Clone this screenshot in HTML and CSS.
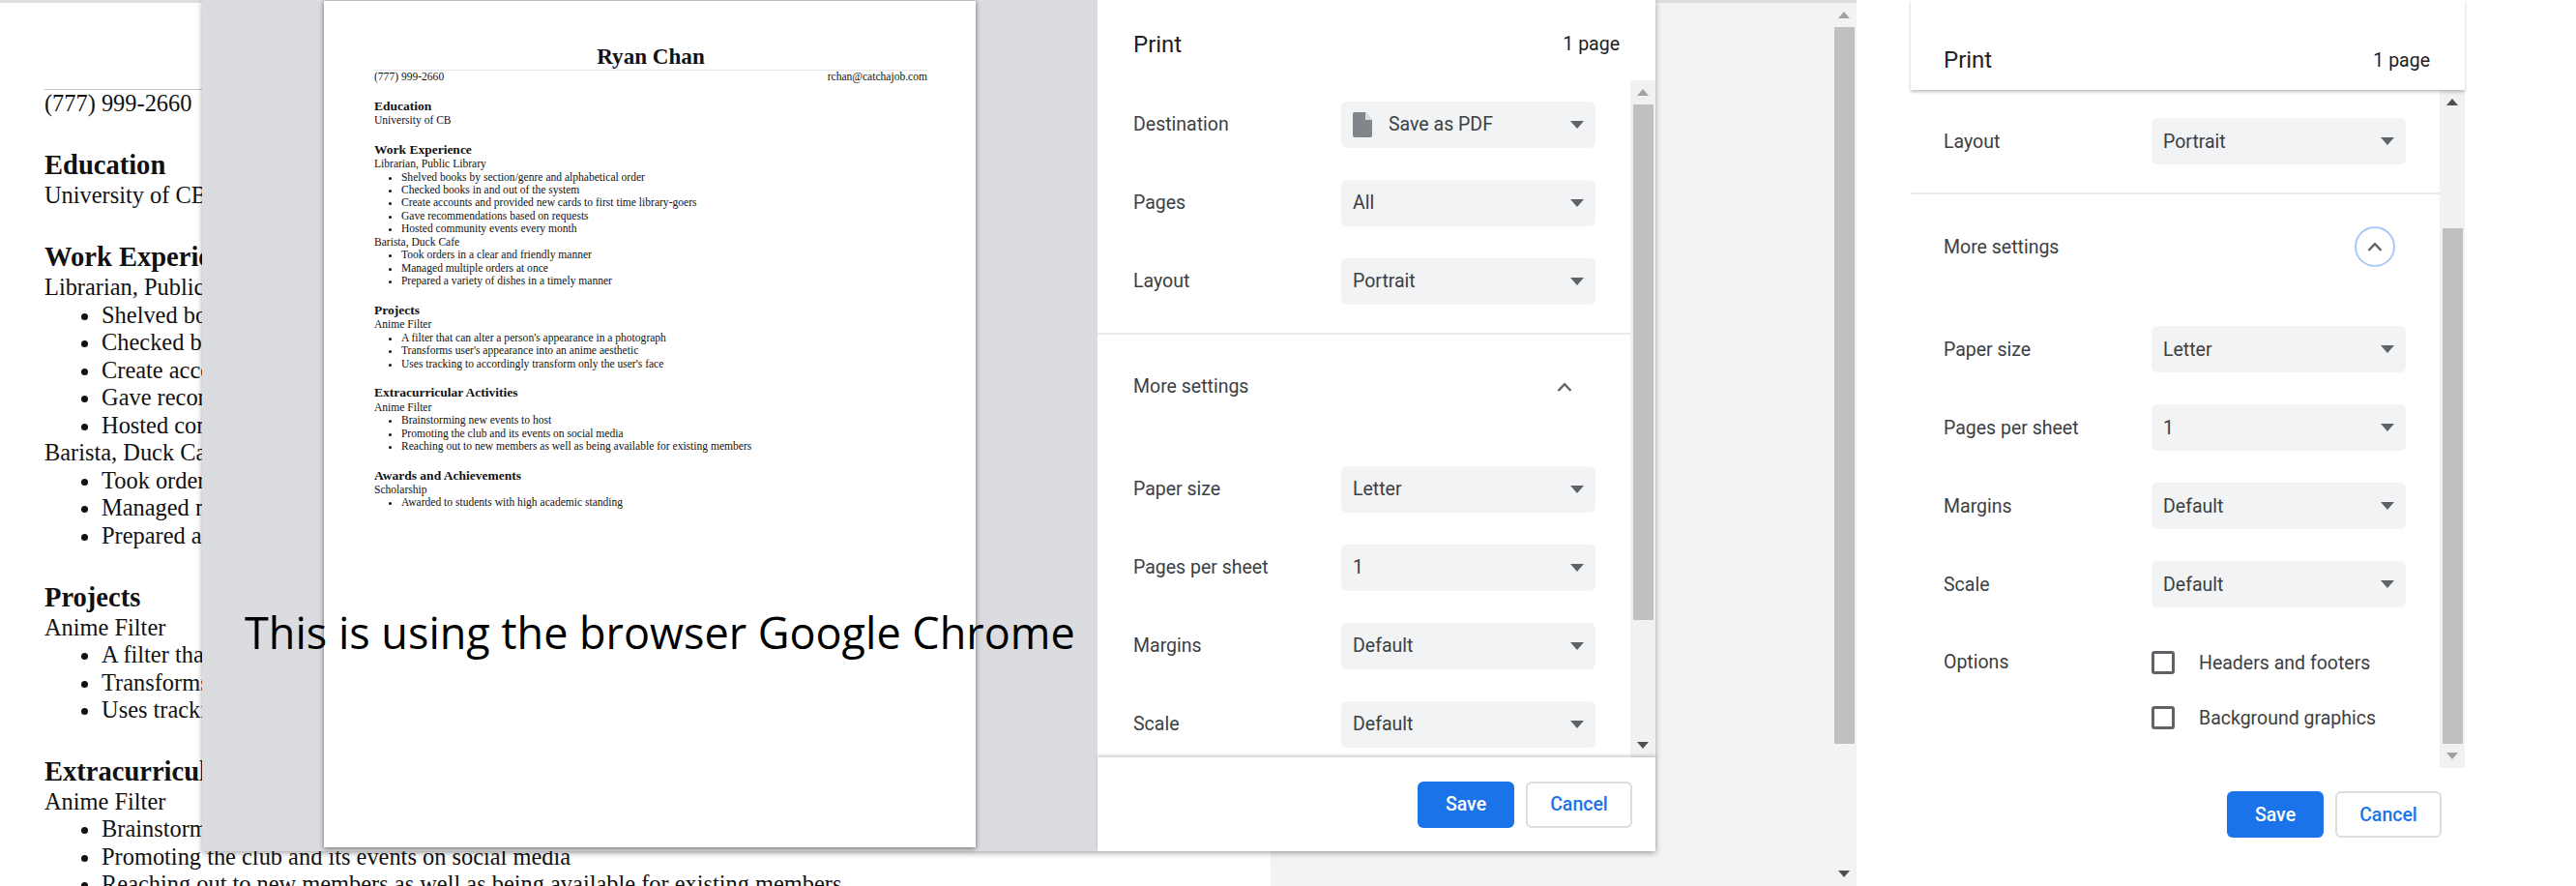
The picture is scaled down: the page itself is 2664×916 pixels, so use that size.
FILE: index.html
```html
<!DOCTYPE html>
<html lang="en">
<head>
  <meta charset="UTF-8">
  <title>Print preview comparison</title>
  <link rel="stylesheet" href="styles.css">
</head>
<body>
  <div class="browser">
    <div class="browser-bar"></div>
    <div class="browser-body">
      <div class="doc">
        <div class="resume resume-page">
          <h1>Ryan Chan</h1>
          <div class="contact"><span>(777) 999-2660</span><span>rchan@catchajob.com</span></div>
          <h2>Education</h2>
          <p>University of CB</p>
          <h2 class="next">Work Experience</h2>
          <p>Librarian, Public Library</p>
          <ul>
            <li>Shelved books by section/genre and alphabetical order</li>
            <li>Checked books in and out of the system</li>
            <li>Create accounts and provided new cards to first time library-goers</li>
            <li>Gave recommendations based on requests</li>
            <li>Hosted community events every month</li>
          </ul>
          <p>Barista, Duck Cafe</p>
          <ul>
            <li>Took orders in a clear and friendly manner</li>
            <li>Managed multiple orders at once</li>
            <li>Prepared a variety of dishes in a timely manner</li>
          </ul>
          <h2 class="next">Projects</h2>
          <p>Anime Filter</p>
          <ul>
            <li>A filter that can alter a person's appearance in a photograph</li>
            <li>Transforms user's appearance into an anime aesthetic</li>
            <li>Uses tracking to accordingly transform only the user's face</li>
          </ul>
          <h2 class="next">Extracurricular Activities</h2>
          <p>Anime Filter</p>
          <ul>
            <li>Brainstorming new events to host</li>
            <li>Promoting the club and its events on social media</li>
            <li>Reaching out to new members as well as being available for existing members</li>
          </ul>
        </div>
      </div>
      <div class="gutter"></div>
      <div class="scrollbar scrollbar-page">
        <span class="arrow-up muted"></span>
        <div class="thumb"></div>
        <span class="arrow-down"></span>
      </div>
    </div>

    <!-- print dialog sits over the page -->
    <div class="dialog">
      <div class="preview">
        <div class="paper">
          <div class="resume resume-sheet">
            <h1>Ryan Chan</h1>
            <div class="contact"><span>(777) 999-2660</span><span>rchan@catchajob.com</span></div>
            <h2>Education</h2>
            <p>University of CB</p>
            <h2 class="next">Work Experience</h2>
            <p>Librarian, Public Library</p>
            <ul>
              <li>Shelved books by section/genre and alphabetical order</li>
              <li>Checked books in and out of the system</li>
              <li>Create accounts and provided new cards to first time library-goers</li>
              <li>Gave recommendations based on requests</li>
              <li>Hosted community events every month</li>
            </ul>
            <p>Barista, Duck Cafe</p>
            <ul>
              <li>Took orders in a clear and friendly manner</li>
              <li>Managed multiple orders at once</li>
              <li>Prepared a variety of dishes in a timely manner</li>
            </ul>
            <h2 class="next">Projects</h2>
            <p>Anime Filter</p>
            <ul>
              <li>A filter that can alter a person's appearance in a photograph</li>
              <li>Transforms user's appearance into an anime aesthetic</li>
              <li>Uses tracking to accordingly transform only the user's face</li>
            </ul>
            <h2 class="next">Extracurricular Activities</h2>
            <p>Anime Filter</p>
            <ul>
              <li>Brainstorming new events to host</li>
              <li>Promoting the club and its events on social media</li>
              <li>Reaching out to new members as well as being available for existing members</li>
            </ul>
            <h2 class="next">Awards and Achievements</h2>
            <p>Scholarship</p>
            <ul>
              <li>Awarded to students with high academic standing</li>
            </ul>
          </div>
        </div>
      </div>

      <div class="sidebar sidebar-main">
        <div class="sidebar-head">
          <span class="print-title">Print</span>
          <span class="page-count">1 page</span>
        </div>
        <div class="sidebar-scroll">
          <div class="settings">
            <div class="row">
              <span class="row-label">Destination</span>
              <div class="select select-dest">
                <svg class="file-icon" width="20" height="26" viewBox="0 0 20 26"><path d="M2 0h11l7 8v16a2 2 0 0 1-2 2H2a2 2 0 0 1-2-2V2a2 2 0 0 1 2-2z" fill="#80868b"/><path d="M13 0l7 8h-7z" fill="#dadce0"/></svg>
                <span>Save as PDF</span>
              </div>
            </div>
            <div class="row">
              <span class="row-label">Pages</span>
              <div class="select"><span>All</span></div>
            </div>
            <div class="row">
              <span class="row-label">Layout</span>
              <div class="select"><span>Portrait</span></div>
            </div>
            <div class="divider"></div>
            <div class="more">
              <span class="row-label">More settings</span>
              <span class="chevron">
                <svg width="16" height="10" viewBox="0 0 16 10"><path d="M1.5 9L8 2.2 14.5 9" fill="none" stroke="#5f6368" stroke-width="2.4"/></svg>
              </span>
            </div>
            <div class="row">
              <span class="row-label">Paper size</span>
              <div class="select"><span>Letter</span></div>
            </div>
            <div class="row">
              <span class="row-label">Pages per sheet</span>
              <div class="select"><span>1</span></div>
            </div>
            <div class="row">
              <span class="row-label">Margins</span>
              <div class="select"><span>Default</span></div>
            </div>
            <div class="row">
              <span class="row-label">Scale</span>
              <div class="select"><span>Default</span></div>
            </div>
          </div>
          <div class="scrollbar scrollbar-main">
            <span class="arrow-up muted"></span>
            <div class="thumb"></div>
            <span class="arrow-down"></span>
          </div>
        </div>
        <div class="sidebar-foot">
          <button class="btn btn-save">Save</button>
          <button class="btn btn-cancel">Cancel</button>
        </div>
      </div>
    </div>

    <div class="caption">This is using the browser Google Chrome</div>
  </div>

  <div class="sidebar sidebar-second">
    <div class="sidebar-head">
      <span class="print-title">Print</span>
      <span class="page-count">1 page</span>
    </div>
    <div class="sidebar-scroll">
      <div class="settings">
        <div class="row">
          <span class="row-label">Layout</span>
          <div class="select"><span>Portrait</span></div>
        </div>
        <div class="divider"></div>
        <div class="more">
          <span class="row-label">More settings</span>
          <span class="chevron chevron-focus">
            <svg width="16" height="10" viewBox="0 0 16 10"><path d="M1.5 9L8 2.2 14.5 9" fill="none" stroke="#5f6368" stroke-width="2.4"/></svg>
          </span>
        </div>
        <div class="row">
          <span class="row-label">Paper size</span>
          <div class="select"><span>Letter</span></div>
        </div>
        <div class="row">
          <span class="row-label">Pages per sheet</span>
          <div class="select"><span>1</span></div>
        </div>
        <div class="row">
          <span class="row-label">Margins</span>
          <div class="select"><span>Default</span></div>
        </div>
        <div class="row">
          <span class="row-label">Scale</span>
          <div class="select"><span>Default</span></div>
        </div>
        <div class="row row-options">
          <span class="row-label">Options</span>
          <div class="options">
            <div class="check"><span class="box"></span>Headers and footers</div>
            <div class="check"><span class="box"></span>Background graphics</div>
          </div>
        </div>
      </div>
      <div class="scrollbar scrollbar-second">
        <span class="arrow-up"></span>
        <div class="thumb"></div>
        <span class="arrow-down muted"></span>
      </div>
    </div>
    <div class="sidebar-foot">
      <button class="btn btn-save">Save</button>
      <button class="btn btn-cancel">Cancel</button>
    </div>
  </div>
</body>
</html>
```

FILE: styles.css
```css
html, body {
  margin: 0;
  height: 916px;
  overflow: hidden;
  background: #fff;
}
body {
  display: flex;
  width: 2664px;
  font-family: Roboto, sans-serif;
}

/* left browser window */
.browser {
  position: relative;
  width: 1920px;
  height: 916px;
  flex: none;
  display: flex;
  flex-direction: column;
}
.browser-bar {
  height: 3px;
  background: #dedede;
}
.browser-body {
  flex: 1;
  display: flex;
  min-height: 0;
}
.doc {
  width: 1314px;
  overflow: hidden;
  background: #fff;
}
.gutter {
  flex: 1;
  background: #f3f3f3;
}

/* resume text, sized in em so page and sheet share it */
.resume {
  font-family: "Liberation Serif", serif;
  color: #111;
  line-height: 1.1667;
}
.resume-page {
  font-size: 24.4px;
  padding: 32px 0 0 46px;
}
.resume-sheet {
  font-size: 11.55px;
  padding: 44px 50px 0 52px;
}
.resume h1 {
  margin: 0;
  font-size: 2em;
  line-height: 1.16;
  text-align: center;
  border-bottom: 1px solid #c8c8c8;
}
.resume-sheet h1 {
  border-bottom-color: #e6e6e6;
}
.contact {
  display: flex;
  justify-content: space-between;
}
.resume h2 {
  margin: 1.17em 0 0;
  font-size: 1.17em;
  line-height: 1.19;
}
.resume h2.next {
  margin-top: 1.14em;
}
.resume p {
  margin: 0;
}
.resume ul {
  margin: 0;
  padding-left: 2.42em;
}

/* print dialog */
.dialog {
  position: absolute;
  left: 209px;
  top: 0;
  width: 1503px;
  height: 880px;
  display: flex;
  background: #fff;
  box-shadow: 0 2px 6px rgba(0, 0, 0, 0.35);
}
.preview {
  width: 926px;
  flex: none;
  background: #dadce0;
}
.paper {
  width: 674px;
  height: 875px;
  margin: 1px 0 0 126px;
  background: #fff;
  box-shadow: 0 1px 5px rgba(0, 0, 0, 0.55);
}
.caption {
  position: absolute;
  left: 253px;
  top: 628px;
  font-family: "Open Sans", sans-serif;
  font-size: 45px;
  line-height: 52px;
  color: #000;
  white-space: nowrap;
}

/* sidebar */
.sidebar {
  display: flex;
  flex-direction: column;
  background: #fff;
  font-size: 19.5px;
  color: #3c4043;
}
.sidebar-main {
  width: 577px;
}
.sidebar-second {
  width: 573px;
  height: 880px;
  margin-left: 56px;
  flex: none;
}
.sidebar-head {
  display: flex;
  justify-content: space-between;
  align-items: center;
  height: 83px;
  padding: 10px 37px 0;
  box-sizing: border-box;
  color: #202124;
}
.sidebar-main .sidebar-head {
  padding-top: 9px;
}
.sidebar-second .sidebar-head {
  height: 105px;
  padding: 31px 36px 0 34px;
  box-shadow: 0 2px 3px rgba(0, 0, 0, 0.25);
  position: relative;
}
.print-title {
  font-size: 24px;
}
.sidebar-scroll {
  flex: none;
  height: 700px;
  display: flex;
  overflow: hidden;
}
.sidebar-second .sidebar-scroll {
  height: 701px;
}
.settings {
  flex: 1;
  padding-top: 22px;
  overflow: hidden;
}
.sidebar-second .settings {
  padding-top: 29px;
}
.row {
  display: flex;
  align-items: center;
  padding-left: 37px;
  margin-bottom: 33px;
}
.sidebar-second .row,
.sidebar-second .more {
  padding-left: 34px;
}
.row-label {
  width: 215px;
  flex: none;
}
.select {
  position: relative;
  display: flex;
  align-items: center;
  width: 263px;
  height: 48px;
  padding: 0 12px;
  box-sizing: border-box;
  background: #f1f3f4;
  border-radius: 6px;
}
.select::after {
  content: "";
  position: absolute;
  right: 12px;
  top: 20px;
  border-left: 7px solid transparent;
  border-right: 7px solid transparent;
  border-top: 8px solid #5f6368;
}
.file-icon {
  margin-right: 17px;
}
.divider {
  height: 2px;
  margin-top: -4px;
  background: #e8eaed;
}
.more {
  display: flex;
  align-items: center;
  justify-content: space-between;
  height: 54px;
  margin: 27px 0 55px;
  padding: 0 47px 0 37px;
}
.chevron {
  width: 42px;
  height: 42px;
  display: flex;
  align-items: center;
  justify-content: center;
  box-sizing: border-box;
  border-radius: 50%;
}
.chevron-focus {
  border: 2px solid #a8c7fa;
  margin-right: -1px;
}
.row-options {
  align-items: flex-start;
  margin-top: 45px;
  margin-bottom: 0;
}
.options {
  display: flex;
  flex-direction: column;
  gap: 33px;
}
.check {
  display: flex;
  align-items: center;
  height: 24px;
}
.box {
  width: 24px;
  height: 24px;
  box-sizing: border-box;
  margin-right: 25px;
  border: 3px solid #5f6368;
  border-radius: 3px;
}

/* scrollbars */
.scrollbar {
  width: 26px;
  flex: none;
  display: flex;
  flex-direction: column;
  align-items: center;
  background: #f1f1f1;
}
.thumb {
  width: 21px;
  height: 533px;
  background: #c0c0c0;
  margin-bottom: auto;
}
.arrow-up,
.arrow-down {
  display: block;
  margin: 9px 0;
  border-left: 6px solid transparent;
  border-right: 6px solid transparent;
}
.arrow-up {
  border-bottom: 7px solid #505050;
}
.arrow-down {
  border-top: 7px solid #505050;
}
.arrow-up.muted {
  border-bottom-color: #a3a3a3;
}
.arrow-down.muted {
  border-top-color: #a3a3a3;
}
.scrollbar-page {
  background: #f3f3f3;
}
.scrollbar-page .thumb {
  height: 741px;
}
.scrollbar-second .thumb {
  margin-top: 118px;
}

/* footer buttons */
.sidebar-foot {
  display: flex;
  justify-content: flex-end;
  gap: 12px;
  padding: 24px 24px 0 0;
  height: 73px;
  position: relative;
}
.sidebar-main .sidebar-foot {
  box-shadow: 0 -2px 3px rgba(0, 0, 0, 0.18);
  padding: 25px 24px 0 0;
}
.btn {
  height: 48px;
  padding: 0;
  border-radius: 6px;
  font-family: Roboto, sans-serif;
  font-size: 19.5px;
  font-weight: 500;
}
.btn-save {
  width: 100px;
  border: none;
  background: #1a73e8;
  color: #fff;
}
.btn-cancel {
  width: 110px;
  border: 2px solid #dadce0;
  background: #fff;
  color: #1a73e8;
}
```
